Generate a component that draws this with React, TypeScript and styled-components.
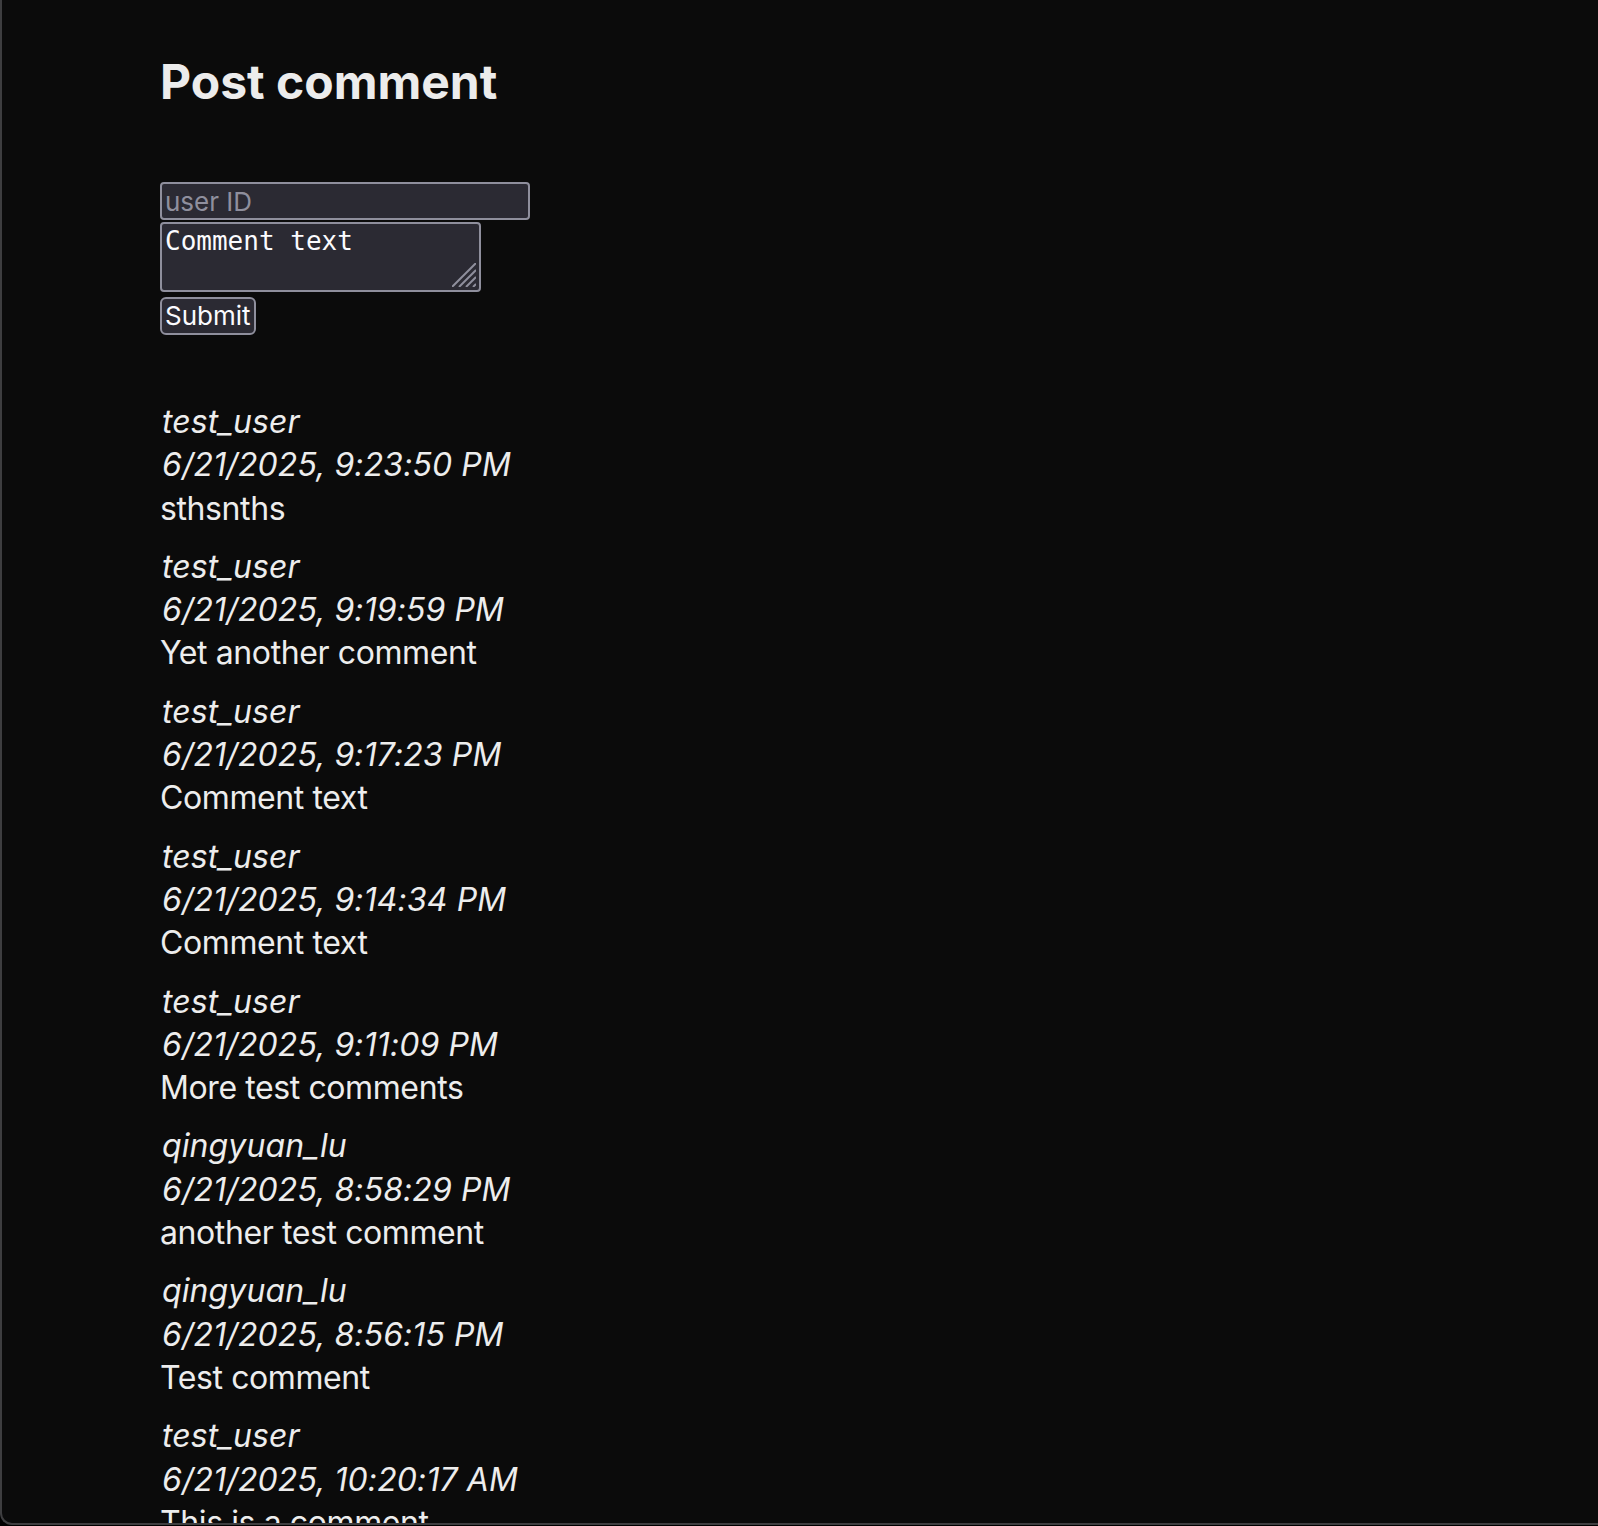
import React from "react";
import styled, { createGlobalStyle } from "styled-components";

const Global = createGlobalStyle`
  html, body {
    margin: 0;
    padding: 0;
    background: #000000;
  }
  #root {
    height: 1526px;
  }
`;

const Window = styled.div`
  box-sizing: border-box;
  height: 1525px;
  background: #0b0b0b;
  border-left: 2px solid #3e3e40;
  border-bottom: 2px solid #3e3e40;
  border-bottom-left-radius: 12px;
  overflow: hidden;
  color: #eeeeee;
  font-family: Inter, "Noto Sans", sans-serif;
`;

const Content = styled.main`
  padding: 53px 0 0 158px;
`;

const Heading = styled.h1`
  margin: 0 0 71px 0;
  font-size: 48px;
  line-height: 58px;
  font-weight: 700;
  letter-spacing: 0;
  color: #ececec;
`;

const Form = styled.form`
  display: flex;
  flex-direction: column;
  align-items: flex-start;
`;

const controlBase = `
  box-sizing: border-box;
  background: #2b2a33;
  border: 2px solid #8f8f9d;
  border-radius: 4px;
  color: #fbfbfe;
  margin: 0;
  outline: none;
`;

const TextInput = styled.input`
  ${controlBase}
  width: 370px;
  height: 38px;
  padding: 0 3px;
  font-family: Inter, "Noto Sans", sans-serif;
  font-size: 26px;
  &::placeholder {
    color: #8f8f9d;
    opacity: 1;
  }
`;

const AreaWrap = styled.div`
  position: relative;
  margin-top: 2px;
  line-height: 0;
`;

const TextArea = styled.textarea`
  ${controlBase}
  display: block;
  width: 321px;
  height: 70px;
  padding: 2px 3px;
  font-family: "DejaVu Sans Mono", "Liberation Mono", monospace;
  font-size: 26px;
  line-height: 30px;
  resize: none;
`;

const Grip = styled.svg`
  position: absolute;
  right: 5px;
  bottom: 5px;
  width: 24px;
  height: 24px;
  pointer-events: none;
`;

const SubmitButton = styled.button`
  ${controlBase}
  margin-top: 5px;
  height: 38px;
  padding: 0 3px;
  border-radius: 6px;
  font-family: Inter, "Noto Sans", sans-serif;
  font-size: 26px;
  line-height: 1;
  cursor: pointer;
`;

const CommentList = styled.ul`
  list-style: none;
  margin: 65px 0 0 0;
  padding: 0;
`;

const CommentItem = styled.li`
  margin: 0 0 15px 0;
`;

const Line = styled.div<{ $italic?: boolean }>`
  font-size: 32px;
  line-height: 43.3px;
  font-style: ${(p) => (p.$italic ? "italic" : "normal")};
  letter-spacing: ${(p) => (p.$italic ? "0.1px" : "-0.4px")};
  padding-left: ${(p) => (p.$italic ? "2px" : "0")};
  color: #ededed;
  white-space: nowrap;
`;

type Comment = { user: string; date: string; text: string };

const comments: Comment[] = [
  { user: "test_user", date: "6/21/2025, 9:23:50 PM", text: "sthsnths" },
  { user: "test_user", date: "6/21/2025, 9:19:59 PM", text: "Yet another comment" },
  { user: "test_user", date: "6/21/2025, 9:17:23 PM", text: "Comment text" },
  { user: "test_user", date: "6/21/2025, 9:14:34 PM", text: "Comment text" },
  { user: "test_user", date: "6/21/2025, 9:11:09 PM", text: "More test comments" },
  { user: "qingyuan_lu", date: "6/21/2025, 8:58:29 PM", text: "another test comment" },
  { user: "qingyuan_lu", date: "6/21/2025, 8:56:15 PM", text: "Test comment" },
  { user: "test_user", date: "6/21/2025, 10:20:17 AM", text: "This is a comment" },
];

export default function App() {
  return (
    <>
      <Global />
      <Window>
        <Content>
          <Heading>Post comment</Heading>
          <Form onSubmit={(e) => e.preventDefault()}>
            <TextInput type="text" placeholder="user ID" />
            <AreaWrap>
              <TextArea defaultValue="Comment text" />
              <Grip viewBox="0 0 24 24" aria-hidden="true">
                <g stroke="#8f8f9d" strokeWidth="2" strokeLinecap="butt">
                  <line x1="0" y1="24" x2="24" y2="0" />
                  <line x1="7" y1="24" x2="24" y2="7" />
                  <line x1="14" y1="24" x2="24" y2="14" />
                  <line x1="21" y1="24" x2="24" y2="21" />
                </g>
              </Grip>
            </AreaWrap>
            <SubmitButton type="submit">Submit</SubmitButton>
          </Form>
          <CommentList>
            {comments.map((c, i) => (
              <CommentItem key={i}>
                <Line $italic>{c.user}</Line>
                <Line $italic>{c.date}</Line>
                <Line>{c.text}</Line>
              </CommentItem>
            ))}
          </CommentList>
        </Content>
      </Window>
    </>
  );
}
